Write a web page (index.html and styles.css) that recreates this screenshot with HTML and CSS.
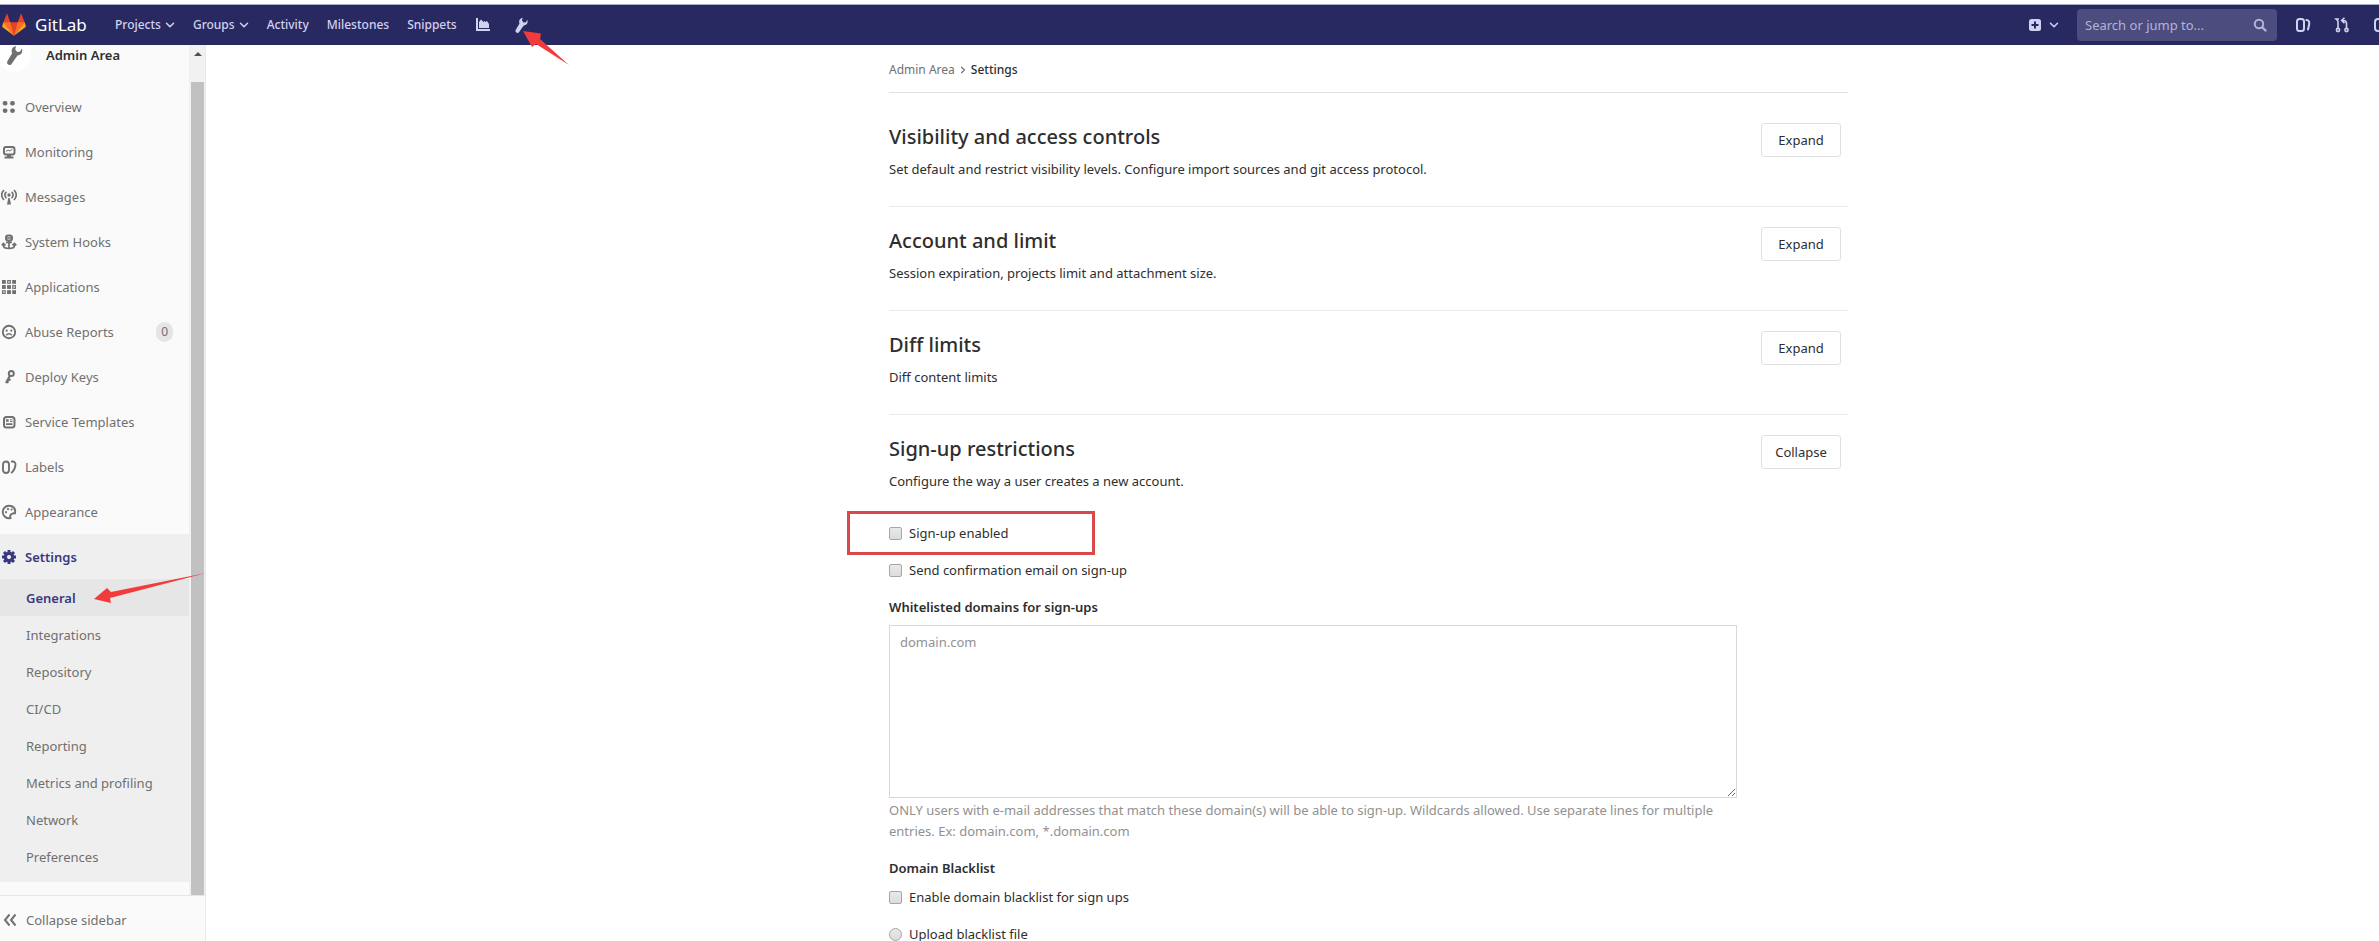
FILE: index.html
```html
<!DOCTYPE html>
<html lang="en">
<head>
<meta charset="utf-8">
<title>Settings · Admin Area · GitLab</title>
<link rel="stylesheet" href="styles.css">
</head>
<body>
<svg class="sprite" aria-hidden="true">
  <symbol id="chevron" viewBox="0 0 10 10"><path d="M1.500 3.200 5 6.800l3.500-3.600" fill="none" stroke="currentColor" stroke-width="1.500" stroke-linecap="round" stroke-linejoin="round"/></symbol>
  <symbol id="wrench" viewBox="0 0 16 16"><path d="M9.600.8 9 3.600l1.600 2 2.400-.4 1.200-2.400c1.200 2.600-.2 5.400-3.400 5.600L6.300 14.700c-.6 1.200-1.900 1.500-2.900.9-1-.6-1.200-1.800-.6-2.900L6.500 6.500C5.400 4 6.700 1.300 9.600.8z" fill="currentColor"/></symbol>
  <symbol id="issues" viewBox="0 0 16 16"><rect x="2" y="2" width="7" height="12" rx="2.500" fill="none" stroke="currentColor" stroke-width="2"/><path d="M11.500 3c2.800.3 3 2 2.600 4.800L13 12.500" fill="none" stroke="currentColor" stroke-width="2" stroke-linecap="round"/></symbol>
</svg>

<header class="navbar">
  <a class="brand" href="#">
    <svg class="tanuki" viewBox="0 0 36 36" aria-hidden="true"><path fill="#e24329" d="M2 14 7.400.5l5 13.500h11.200l5-13.500L34 14l-16 20z"/><path fill="#fc6d26" d="M2 14h10.400L18 34zM34 14H23.600L18 34z"/><path fill="#fca326" d="m2 14-1.600 5.500c-.2.800 0 1.500.6 2L18 34zM34 14l1.600 5.500c.2.800 0 1.500-.6 2L18 34z"/></svg>
    <span>GitLab</span>
  </a>
  <nav class="menu" aria-label="Primary">
    <a href="#">Projects <svg class="caret"><use href="#chevron"/></svg></a>
    <a href="#">Groups <svg class="caret"><use href="#chevron"/></svg></a>
    <a href="#">Activity</a>
    <a href="#">Milestones</a>
    <a href="#">Snippets</a>
    <a class="tool" href="#" aria-label="Instance statistics"><svg class="icon" viewBox="0 0 16 16"><path d="M1 1h2v11h12v2H1zM4 11V5l2-2.500L8.500 5l1-1 1 1L12 4l2 3v4z" fill="currentColor"/></svg></a>
    <a class="tool" href="#" aria-label="Admin Area"><svg class="icon"><use href="#wrench"/></svg></a>
  </nav>
  <div class="tools">
    <a class="create" href="#" aria-label="New"><svg class="plus" viewBox="0 0 12 12"><rect width="12" height="12" rx="2.500" fill="currentColor"/><path d="M6 2.500v7M2.500 6h7" stroke="#292961" stroke-width="2"/></svg><svg class="caret"><use href="#chevron"/></svg></a>
    <div class="search">
      <input type="search" aria-label="Search" placeholder="Search or jump to...">
      <svg class="lens" viewBox="0 0 14 14" aria-hidden="true"><circle cx="6" cy="6" r="4.200" fill="none" stroke="currentColor" stroke-width="2"/><path d="m9.500 9.500 3 3" stroke="currentColor" stroke-width="2.400" stroke-linecap="round"/></svg>
    </div>
    <a href="#" aria-label="Issues"><svg class="icon"><use href="#issues"/></svg></a>
    <a href="#" aria-label="Merge requests"><svg class="icon" viewBox="0 0 16 16"><g fill="none" stroke="currentColor" stroke-width="1.600"><circle cx="4" cy="13" r="1.600"/><circle cx="12.500" cy="13" r="1.600"/><path d="M4 11.500V4M12.500 11.500V6.500c0-2-1-3-3-3H8M10.500.8 7.600 3.500l2.900 2.600M4 4 2 2h3"/></g></svg></a>
    <a href="#" aria-label="Todos"><svg class="icon" viewBox="0 0 16 16"><rect x="2" y="2" width="12" height="12" rx="3" fill="none" stroke="currentColor" stroke-width="2"/></svg></a>
  </div>
</header>

<div class="page">
  <aside class="sidebar">
    <div class="scroller">
      <div class="side-content">
        <a class="context" href="#"><span class="avatar"><svg><use href="#wrench"/></svg></span><strong>Admin Area</strong></a>
        <nav class="side-nav" aria-label="Admin">
          <a href="#"><svg class="icon" viewBox="0 0 16 16"><g fill="none" stroke="currentColor" stroke-width="2.200"><rect x="2.800" y="3.200" width="2.600" height="2.200" rx="1"/><rect x="10.200" y="3.200" width="2.600" height="2.200" rx="1"/><rect x="2.800" y="10.600" width="2.600" height="2.200" rx="1"/><rect x="10.200" y="10.600" width="2.600" height="2.200" rx="1"/></g></svg>Overview</a>
          <a href="#"><svg class="icon" viewBox="0 0 16 16"><rect x="3" y="3" width="10.500" height="7.500" rx="2" fill="none" stroke="currentColor" stroke-width="2"/><path d="m5 7.500 2-1.500 2 1 2.500-2" fill="none" stroke="currentColor"/><path d="M6 11h4v1.500h2.500V14.500h-9v-2H6z" fill="currentColor"/></svg>Monitoring</a>
          <a href="#"><svg class="icon" viewBox="0 0 16 16"><g fill="none" stroke="currentColor" stroke-width="1.600" stroke-linecap="round"><path d="M2.600 1.500c-2.300 2.700-2.300 6.300 0 9M5 3.300c-1.400 1.700-1.400 3.700 0 5.400M13.400 1.500c2.300 2.700 2.300 6.300 0 9M11 3.300c1.400 1.700 1.400 3.700 0 5.400"/></g><circle cx="8" cy="6" r="1.700" fill="currentColor"/><path d="M7.300 9h1.400l1.300 6.500H6z" fill="currentColor"/></svg>Messages</a>
          <a href="#"><svg class="icon" viewBox="0 0 16 16"><g fill="none" stroke="currentColor" stroke-width="2"><rect x="5" y="1.500" width="6" height="5" rx="2.300"/><path d="M5 4h6M8 7v7M5 8.300h6M2.500 9.500v2c0 2 2 3 5.500 3s5.500-1 5.500-3v-2M.8 11.300l1.700-1.800 2 1.800M11.500 11.300l2-1.800 1.800 1.800" stroke-width="1.700"/></g></svg>System Hooks</a>
          <a href="#"><svg class="icon" viewBox="0 0 16 16"><g fill="currentColor" stroke="currentColor" stroke-width="1.200"><rect x="1.600" y="1.600" width="2.600" height="2.600"/><rect x="6.700" y="1.600" width="2.600" height="2.600" fill="none"/><rect x="11.800" y="1.600" width="2.600" height="2.600"/><rect x="1.600" y="6.700" width="2.600" height="2.600"/><rect x="6.700" y="6.700" width="2.600" height="2.600"/><rect x="11.800" y="6.700" width="2.600" height="2.600" fill="none"/><rect x="1.600" y="11.800" width="2.600" height="2.600" fill="none"/><rect x="6.700" y="11.800" width="2.600" height="2.600"/><rect x="11.800" y="11.800" width="2.600" height="2.600"/></g></svg>Applications</a>
          <a href="#"><svg class="icon" viewBox="0 0 16 16"><circle cx="8" cy="8" r="6.200" fill="none" stroke="currentColor" stroke-width="1.900"/><circle cx="5.700" cy="6.700" r="1.100" fill="currentColor"/><circle cx="10.300" cy="6.700" r="1.100" fill="currentColor"/><path d="M5.300 11.200c1.400-1.900 4-1.900 5.400 0" fill="none" stroke="currentColor" stroke-width="1.500"/></svg>Abuse Reports<span class="badge">0</span></a>
          <a href="#"><svg class="icon" viewBox="0 0 16 16"><circle cx="10.300" cy="4.500" r="2.500" fill="none" stroke="currentColor" stroke-width="2"/><path d="M8.800 7 5 14M7 10.300l2.500 1M5.600 12.700l2 .9" fill="none" stroke="currentColor" stroke-width="2.200"/></svg>Deploy Keys</a>
          <a href="#"><svg class="icon" viewBox="0 0 16 16"><rect x="3" y="3" width="10.500" height="10.500" rx="2.500" fill="none" stroke="currentColor" stroke-width="2"/><path d="M5 5.200h2.700v2.500H5zM9 5.200h2.500v1H9zM9 7h2.500v1H9zM5 9.300h6.500v1.600H5z" fill="currentColor"/></svg>Service Templates</a>
          <a href="#"><svg class="icon" viewBox="0 0 16 16"><path d="M2 5.500c0-4 6-4 6 0v5.500c0 4-6 4-6 0z" fill="none" stroke="currentColor" stroke-width="1.900"/><path d="M10 2.600c4-.6 5 1.500 4.300 4.400-.8 3.500-1.500 5.700-4.300 6.800" fill="none" stroke="currentColor" stroke-width="1.900"/></svg>Labels</a>
          <a href="#"><svg class="icon" viewBox="0 0 16 16"><path d="M14 9.300C15 4.500 12 1.800 8 1.800a6.200 6.200 0 1 0 1.500 12.200c-1.300-2.600 1-5.200 4.500-4.700z" fill="none" stroke="currentColor" stroke-width="1.900"/><g fill="currentColor"><circle cx="5" cy="8.200" r="1.100"/><circle cx="7" cy="5.200" r="1.100"/><circle cx="10.600" cy="5.500" r="1.100"/></g></svg>Appearance</a>
        </nav>
        <div class="current">
          <a class="current-title" href="#"><svg class="icon" viewBox="0 0 16 16"><circle cx="8" cy="8" r="3.600" fill="none" stroke="currentColor" stroke-width="3.400"/><path d="M8 1v4M8 11v4M1 8h4M11 8h4M3 3l2.500 2.500M10.500 10.500l2.500 2.500M3 13l2.500-2.500M10.500 5.500 13 3" stroke="currentColor" stroke-width="3"/><circle cx="8" cy="8" r="1.800" fill="#efefef"/></svg>Settings</a>
          <a class="active" href="#">General</a>
          <a href="#">Integrations</a>
          <a href="#">Repository</a>
          <a href="#">CI/CD</a>
          <a href="#">Reporting</a>
          <a href="#">Metrics and profiling</a>
          <a href="#">Network</a>
          <a href="#">Preferences</a>
        </div>
      </div>
      <div class="scrollbar" aria-hidden="true"><span class="up"></span><span class="thumb"></span></div>
    </div>
    <button class="collapse" type="button"><svg class="icon" viewBox="0 0 16 16"><path d="M7.500 2.500 3 8l4.500 5.500M13.500 2.500 9 8l4.500 5.500" fill="none" stroke="currentColor" stroke-width="2"/></svg>Collapse sidebar</button>
  </aside>

  <main class="main">
    <div class="content">
      <nav class="breadcrumb" aria-label="Breadcrumb"><a href="#">Admin Area</a><svg class="sep"><use href="#chevron"/></svg><strong>Settings</strong></nav>

      <section class="panel"><div><h2>Visibility and access controls</h2><p>Set default and restrict visibility levels. Configure import sources and git access protocol.</p></div><button type="button">Expand</button></section>
      <section class="panel"><div><h2>Account and limit</h2><p>Session expiration, projects limit and attachment size.</p></div><button type="button">Expand</button></section>
      <section class="panel"><div><h2>Diff limits</h2><p>Diff content limits</p></div><button type="button">Expand</button></section>
      <section class="panel"><div><h2>Sign-up restrictions</h2><p>Configure the way a user creates a new account.</p></div><button type="button">Collapse</button></section>

      <form class="signup">
        <div class="check marked"><input id="signup" type="checkbox"><label for="signup">Sign-up enabled</label></div>
        <div class="check"><input id="confirm" type="checkbox"><label for="confirm">Send confirmation email on sign-up</label></div>
        <label class="field-label" for="whitelist">Whitelisted domains for sign-ups</label>
        <textarea id="whitelist" placeholder="domain.com"></textarea>
        <p class="help">ONLY users with e-mail addresses that match these domain(s) will be able to sign-up. Wildcards allowed. Use separate lines for multiple entries. Ex: domain.com, *.domain.com</p>
        <fieldset>
          <legend>Domain Blacklist</legend>
          <div class="check"><input id="blacklist" type="checkbox"><label for="blacklist">Enable domain blacklist for sign ups</label></div>
          <div class="check"><input id="upload" type="radio" name="source"><label for="upload">Upload blacklist file</label></div>
        </fieldset>
      </form>
    </div>
  </main>
</div>

<svg class="arrow arrow-admin" viewBox="0 0 50 38" aria-hidden="true"><path d="M1 1 19 3.500 18 9 47 35 14 14 10 17z"/></svg>
<svg class="arrow arrow-general" viewBox="0 0 114 34" aria-hidden="true"><path d="M1 27 14 16l4 4L113 1 17 26l1 5z"/></svg>
</body>
</html>
```
FILE: styles.css
```css
*, *::after { box-sizing: border-box; }
body {
  margin: 0;
  height: 100vh;
  overflow: hidden;
  display: flex;
  flex-direction: column;
  padding-top: 4px;
  background: #fff;
  color: #2e2e2e;
  font: 13px/20px "Noto Sans", sans-serif;
}
a { color: inherit; text-decoration: none; }
button, input, textarea { font: inherit; color: inherit; }
h2, p { margin: 0; }
.sprite { position: absolute; width: 0; height: 0; }
.icon { width: 16px; height: 16px; flex: none; }
.caret { width: 10px; height: 10px; }

.navbar {
  flex: none;
  height: 41px;
  display: flex;
  align-items: center;
  background: #292961;
  border-top: 1px solid #a9a9c8;
  color: #d1d1f0;
  overflow: hidden;
}
.brand { display: flex; align-items: center; gap: 9px; margin-left: 2px; width: 113px; font-size: 17px; color: #fff; }
.tanuki { width: 24px; height: 24px; }
.menu { display: flex; align-items: center; gap: 18px; font-size: 12px; font-weight: 500; }
.menu a { display: flex; align-items: center; gap: 4px; }
.menu .tool { width: 20px; }
.tools { margin-left: auto; margin-right: -10px; display: flex; flex: none; align-items: center; gap: 23px; }
.create { display: flex; align-items: center; gap: 8px; margin-right: -5px; }
.plus { width: 12px; height: 12px; }
.search { width: 200px; height: 32px; display: flex; align-items: center; padding: 0 10px 0 8px; background: #4c4c7f; border-radius: 4px; margin-right: -5px; }
.search input { flex: 1; min-width: 0; border: 0; padding: 0; background: none; outline: 0; }
.search input::placeholder { color: #b3b3d8; opacity: 1; }
.lens { width: 14px; height: 14px; color: #b3b3d8; }
.tools .icon { display: block; }

.page { flex: 1; min-height: 0; display: flex; }
.sidebar { width: 206px; flex: none; display: flex; flex-direction: column; background: #fafafa; border-right: 1px solid #e8e8e8; color: #707070; }
.scroller { flex: 1; min-height: 0; display: flex; overflow: hidden; }
.side-content { flex: 1; }
.context { display: flex; align-items: center; gap: 15px; height: 40px; margin-top: -10px; color: #2e2e2e; }
.context strong { font-weight: 600; }
.avatar { width: 34px; height: 34px; margin-left: -3px; display: grid; place-items: center; border-radius: 50%; background: #fff; color: #707070; }
.avatar svg { width: 20px; height: 20px; }
.side-nav { padding-top: 9px; }
.side-nav a, .current-title { display: flex; align-items: center; gap: 8px; height: 45px; padding-left: 1px; }
.badge { margin-left: auto; margin-right: 16px; padding: 0 5px; border-radius: 10px; background: #e5e5e5; font-size: 12px; }
.current { background: #efefef; padding-bottom: 7px; }
.current a { display: flex; align-items: center; height: 37px; padding-left: 26px; }
.current .current-title { height: 45px; padding-left: 1px; color: #393982; font-weight: 600; }
.current .active { background: #e6e6e6; color: #393982; font-weight: 600; }
.scrollbar { width: 16px; flex: none; padding: 0 1px 0 2px; display: flex; flex-direction: column; align-items: center; background: #f1f1f1; }
.up { margin-top: 7px; border: 4px solid transparent; border-top: 0; border-bottom: 4px solid #505050; }
.thumb { flex: 1; width: 13px; margin-top: 26px; background: #c1c1c1; }
.collapse { display: flex; align-items: center; gap: 8px; height: 46px; flex: none; padding: 2px 0 0 2px; border: 0; border-top: 1px solid #e5e5e5; background: none; }

.main { flex: 1; min-width: 0; display: grid; grid-template-columns: 683fr minmax(0, 959px) 531fr; overflow: hidden; }
.content { grid-column: 2; }
.breadcrumb { display: flex; align-items: center; height: 48px; padding-top: 2px; border-bottom: 1px solid #e1e1e1; font-size: 12px; color: #707070; }
.sep { width: 8px; height: 8px; margin: 0 4px; transform: rotate(-90deg); }
.breadcrumb strong { font-weight: 500; color: #2e2e2e; }
.panel { display: flex; justify-content: space-between; align-items: flex-start; height: 104px; padding: 20px 7px 0 0; border-bottom: 1px solid #eaeaea; }
.breadcrumb + .panel { height: 114px; padding-top: 30px; }
.panel:last-of-type { height: 96px; border: 0; }
.panel h2 { font-size: 20px; line-height: 28px; font-weight: 500; }
.panel p { margin-top: 8px; }
.panel button { width: 80px; height: 34px; border: 1px solid #e0e0e0; border-radius: 3px; background: #fff; padding: 0; }

.signup { width: 848px; max-width: 100%; }
.check { position: relative; display: flex; align-items: center; gap: 7px; height: 20px; margin-bottom: 17px; }
.check input { appearance: none; width: 13px; height: 13px; margin: 0; border: 1px solid #a6a6a6; border-radius: 2px; background: linear-gradient(#e9e9e9, #dcdcdc); }
.check input[type="radio"] { border-radius: 50%; }
.marked { margin-top: 12px; }
.marked::after { content: ""; position: absolute; left: -42px; top: -12px; width: 248px; height: 44px; border: 3px solid #d9484a; pointer-events: none; }
.field-label, legend { display: block; font-weight: 600; padding: 0; }
textarea { display: block; width: 100%; height: 173px; margin-top: 8px; padding: 6px 10px; border: 1px solid #d8d8d8; background: #fff; resize: both; }
textarea::placeholder { color: #919191; opacity: 1; }
.help { color: #919191; line-height: 21px; margin-top: 2px; }
fieldset { margin: 16px 0 0; padding: 0; border: 0; }
legend { margin-bottom: 9px; }

.arrow { position: absolute; fill: #f43b3b; pointer-events: none; }
.arrow-admin { left: 522px; top: 30px; width: 50px; height: 38px; }
.arrow-general { left: 93px; top: 572px; width: 114px; height: 34px; }
```
